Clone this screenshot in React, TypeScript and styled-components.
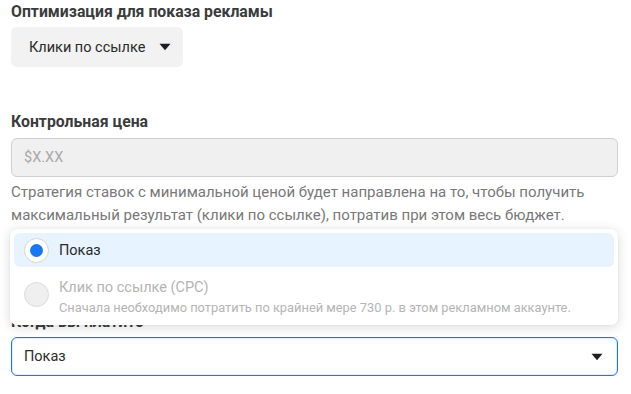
import React from "react";
import styled, { createGlobalStyle } from "styled-components";

const GlobalStyle = createGlobalStyle`
  html, body { margin: 0; padding: 0; background: #ffffff; }
  body { font-family: Roboto, "Liberation Sans", Arial, sans-serif; color: #1c1e21; }
  * { box-sizing: border-box; }
`;

const Page = styled.div`
  position: relative;
  width: 631px;
  height: 394px;
  padding: 3px 13px 0 11px;
  display: flex;
  flex-direction: column;
`;

const Label = styled.div<{ $mt?: number }>`
  font-size: 15.8px;
  font-weight: 700;
  line-height: 18px;
  color: #3a3b3c;
  margin-top: ${(p) => p.$mt ?? 0}px;
`;

const PillButton = styled.button`
  margin-top: 6px;
  align-self: flex-start;
  width: 172px;
  height: 40px;
  border: none;
  border-radius: 6px;
  background: #f2f2f2;
  display: flex;
  align-items: center;
  gap: 14px;
  padding: 0 0 0 18px;
  font-family: inherit;
  font-size: 14.5px;
  color: #2b2b2b;
`;

const TextInput = styled.div`
  margin-top: 7px;
  height: 39px;
  border: 1px solid #d0d0d0;
  border-radius: 6px;
  background: #f0f0f0;
  display: flex;
  align-items: center;
  padding-left: 12px;
  font-size: 14.5px;
  color: #a8a8a8;
`;

const Help = styled.p`
  margin: 4px 0 0 0;
  font-size: 15px;
  line-height: 22.5px;
  color: #787878;
`;

const Select = styled.div`
  margin-top: 6px;
  height: 39px;
  border: 1px solid #1877f2;
  border-radius: 6px;
  background: #ffffff;
  box-shadow: inset 0 0 0 1px rgba(24, 119, 242, 0.12);
  display: flex;
  align-items: center;
  justify-content: space-between;
  padding: 0 14px 0 12px;
  font-size: 14.5px;
  color: #2b2b2b;
`;

const Menu = styled.div`
  position: absolute;
  left: 10px;
  top: 229px;
  width: 608px;
  height: 96px;
  background: #ffffff;
  border-radius: 7px;
  box-shadow: 0 2px 12px rgba(0, 0, 0, 0.15), 0 0 2px rgba(0, 0, 0, 0.06);
  padding: 4px;
  display: flex;
  flex-direction: column;
  gap: 4px;
`;

const Option = styled.div<{ $active?: boolean; $tall?: boolean }>`
  height: ${(p) => (p.$tall ? 52 : 35)}px;
  border-radius: 6px;
  background: ${(p) => (p.$active ? "#e7f3ff" : "transparent")};
  display: flex;
  align-items: center;
  gap: 10px;
  padding-left: 10px;
`;

const Radio = styled.span<{ $checked?: boolean; $disabled?: boolean }>`
  width: 25px;
  height: 25px;
  flex: none;
  border-radius: 50%;
  border: 1px solid ${(p) => (p.$disabled ? "#dcdcdc" : "#d6d6d6")};
  background: ${(p) => (p.$disabled ? "#efefef" : "#ffffff")};
  display: flex;
  align-items: center;
  justify-content: center;
  margin-top: ${(p) => (p.$disabled ? -3 : 2)}px;
  &::after {
    content: "";
    display: ${(p) => (p.$checked ? "block" : "none")};
    width: 13px;
    height: 13px;
    border-radius: 50%;
    background: #1877f2;
  }
`;

const OptionText = styled.div`
  display: flex;
  flex-direction: column;
  padding-top: 4px;
`;

const OptionTitle = styled.span<{ $disabled?: boolean; $nudge?: number }>`
  font-size: 14.5px;
  line-height: 18px;
  margin-top: ${(p) => p.$nudge ?? 0}px;
  color: ${(p) => (p.$disabled ? "#b4b4b4" : "#2b2b2b")};
`;

const OptionSub = styled.span`
  font-size: 12.85px;
  line-height: 17px;
  margin-top: 2px;
  color: #b4b4b4;
`;

const Caret = () => (
  <svg width="12" height="8" viewBox="0 0 12 8" aria-hidden="true">
    <path d="M0.5 0.8 H11.5 L6 7.2 Z" fill="#1c1e21" />
  </svg>
);

export default function App() {
  return (
    <>
      <GlobalStyle />
      <Page>
        <Label>Оптимизация для показа рекламы</Label>
        <PillButton>
          Клики по ссылке <Caret />
        </PillButton>
        <Label $mt={46}>Контрольная цена</Label>
        <TextInput>$X.XX</TextInput>
        <Help>
          Стратегия ставок с минимальной ценой будет направлена на то, чтобы получить
          максимальный результат (клики по ссылке), потратив при этом весь бюджет.
        </Help>
        <Label $mt={87}>Когда вы платите</Label>
        <Select>
          Показ <Caret />
        </Select>
        <Menu>
          <Option $active>
            <Radio $checked />
            <OptionTitle $nudge={3}>Показ</OptionTitle>
          </Option>
          <Option $tall>
            <Radio $disabled />
            <OptionText>
              <OptionTitle $disabled>Клик по ссылке (CPC)</OptionTitle>
              <OptionSub>Сначала необходимо потратить по крайней мере 730 р. в этом рекламном аккаунте.</OptionSub>
            </OptionText>
          </Option>
        </Menu>
      </Page>
    </>
  );
}
